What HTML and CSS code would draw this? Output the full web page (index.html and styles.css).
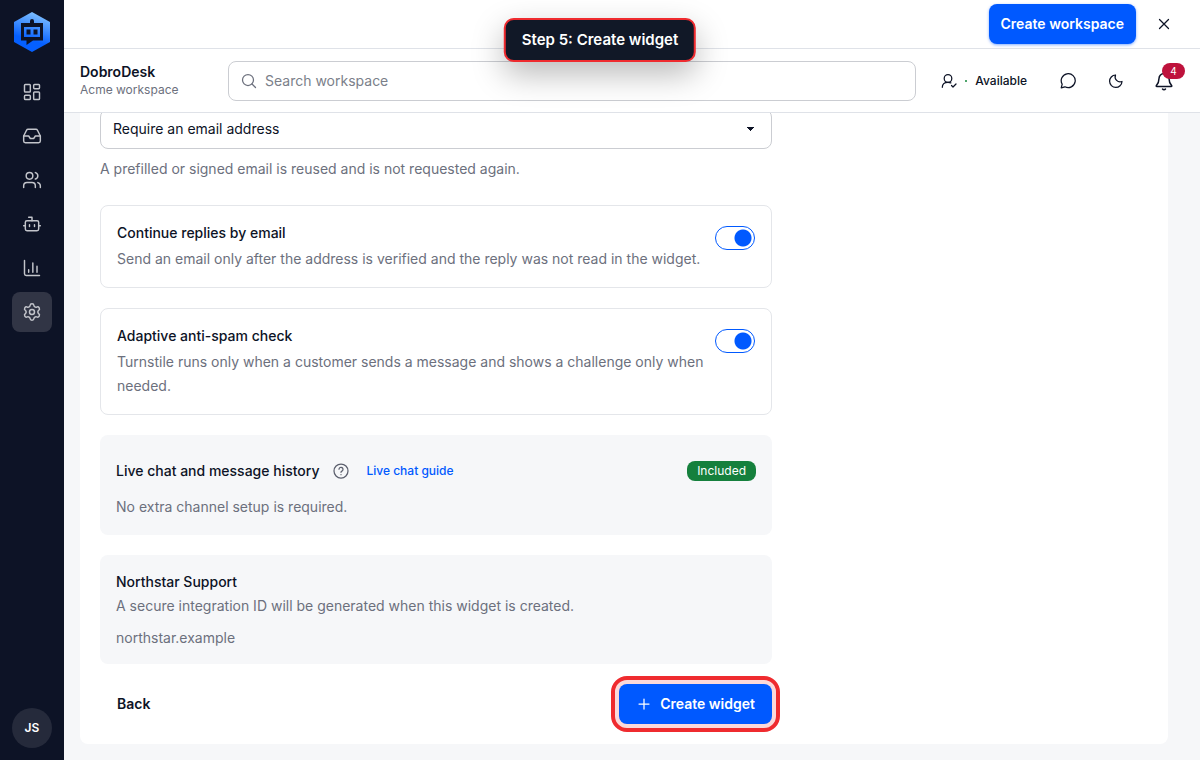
FILE: index.html
```html
<!DOCTYPE html>
<html lang="en">
<head>
    <meta charset="UTF-8">
    <meta name="viewport" content="width=device-width, initial-scale=1.0">
    <title>DobroDesk</title>
    <link rel="stylesheet" href="styles.css">
</head>
<body>
    <aside class="sidebar">
        <a class="logo" href="#" aria-label="DobroDesk">
            <svg width="36" height="40" viewBox="0 0 36 40">
                <defs>
                    <linearGradient id="logoFill" gradientUnits="userSpaceOnUse" x1="24" y1="2" x2="16" y2="28">
                        <stop offset="0" stop-color="#7abcff"/>
                        <stop offset="1" stop-color="#0560ff"/>
                    </linearGradient>
                </defs>
                <path fill="url(#logoFill)" d="M18 0l18 10v20L18 40 0 30V10z"/>
                <path fill="#0d1326" d="M16 11V9a2 2 0 0 1 4 0v2h9v17.500H19l-6.500 4.500v-4.500H7V11z"/>
                <path fill="url(#logoFill)" d="M10 15h16v10H10z"/>
                <path fill="#0d1326" d="M12.500 17.500h4v5h-4zM19.500 17.500h4v5h-4z"/>
            </svg>
        </a>
        <nav class="nav">
            <a class="nav-item" href="#" aria-label="Dashboard">
                <svg class="icon" viewBox="0 0 24 24"><rect x="3" y="3" width="7" height="9" rx="1"/><rect x="14" y="3" width="7" height="5" rx="1"/><rect x="14" y="12" width="7" height="9" rx="1"/><rect x="3" y="16" width="7" height="5" rx="1"/></svg>
            </a>
            <a class="nav-item" href="#" aria-label="Inbox">
                <svg class="icon" viewBox="0 0 24 24"><path d="M22 12h-6l-2 3h-4l-2-3H2"/><path d="M5.450 5.110 2 12v6a2 2 0 0 0 2 2h16a2 2 0 0 0 2-2v-6l-3.450-6.890A2 2 0 0 0 16.760 4H7.240a2 2 0 0 0-1.790 1.110z"/></svg>
            </a>
            <a class="nav-item" href="#" aria-label="Customers">
                <svg class="icon" viewBox="0 0 24 24"><path d="M16 21v-2a4 4 0 0 0-4-4H6a4 4 0 0 0-4 4v2"/><circle cx="9" cy="7" r="4"/><path d="M22 21v-2a4 4 0 0 0-3-3.870"/><path d="M16 3.130a4 4 0 0 1 0 7.750"/></svg>
            </a>
            <a class="nav-item" href="#" aria-label="Bots">
                <svg class="icon" viewBox="0 0 24 24"><path d="M12 8V4H8"/><rect x="4" y="8" width="16" height="12" rx="2"/><path d="M2 14h2M20 14h2M15 13v2M9 13v2"/></svg>
            </a>
            <a class="nav-item" href="#" aria-label="Reports">
                <svg class="icon" viewBox="0 0 24 24"><path d="M3 3v16a2 2 0 0 0 2 2h16"/><path d="M8 17v-3M13 17V6M18 17v-7"/></svg>
            </a>
            <a class="nav-item active" href="#" aria-label="Settings">
                <svg class="icon" viewBox="0 0 24 24"><path d="M9.671 4.136a2.340 2.340 0 0 1 4.659 0 2.340 2.340 0 0 0 3.319 1.915 2.340 2.340 0 0 1 2.330 4.033 2.340 2.340 0 0 0 0 3.831 2.340 2.340 0 0 1-2.330 4.033 2.340 2.340 0 0 0-3.319 1.915 2.340 2.340 0 0 1-4.659 0 2.340 2.340 0 0 0-3.320-1.915 2.340 2.340 0 0 1-2.330-4.033 2.340 2.340 0 0 0 0-3.831A2.340 2.340 0 0 1 6.350 6.051a2.340 2.340 0 0 0 3.319-1.915"/><circle cx="12" cy="12" r="3"/></svg>
            </a>
        </nav>
        <button class="avatar" type="button">JS</button>
    </aside>

    <div class="page">
        <!-- workspace bar -->
        <div class="topbar">
            <button class="btn primary" type="button">Create workspace</button>
            <button class="icon-btn" type="button" aria-label="Close">
                <svg class="icon small" viewBox="0 0 16 16"><path d="M3.500 3.500l9 9M12.500 3.500l-9 9"/></svg>
            </button>
        </div>

        <header class="header">
            <div class="brand">
                <div class="brand-name">DobroDesk</div>
                <div class="brand-sub">Acme workspace</div>
            </div>
            <label class="search">
                <svg class="icon small" viewBox="0 0 16 16"><circle cx="7" cy="7" r="5.500"/><path d="M11 11l3.500 3.500"/></svg>
                <input type="text" placeholder="Search workspace" aria-label="Search workspace">
            </label>
            <div class="actions">
                <button class="status" type="button">
                    <svg class="icon small" viewBox="0 0 16 16"><circle cx="7" cy="5.500" r="3.800"/><path d="M1.300 14.300c0-3 2-5 5.700-5 1.200 0 2 .2 2.800.6M10.500 12.500l1.500 1.500 3-3"/></svg>
                    <span class="dot"></span>
                    <span>Available</span>
                </button>
                <button class="icon-btn" type="button" aria-label="Chat">
                    <svg class="icon small" viewBox="0 0 16 16"><path d="M1.200 14.800l1-3.600A7 7 0 1 1 4.900 13.800z"/></svg>
                </button>
                <button class="icon-btn" type="button" aria-label="Dark mode">
                    <svg class="icon small" viewBox="0 0 16 16"><path d="M7.500 2A5 5 0 0 0 14 8.500 6.200 6.200 0 1 1 7.500 2z"/></svg>
                </button>
                <button class="icon-btn bell" type="button" aria-label="Notifications">
                    <svg class="icon bell-icon" viewBox="0 0 20 20"><path d="M10 2.500a5 5 0 0 0-5 5c0 3.500-.8 5-2.600 7-.4.500-.2 1 .4 1h14.400c.6 0 .8-.5.4-1-1.800-2-2.600-3.500-2.600-7a5 5 0 0 0-5-5z"/><path d="M8.500 18a2 2 0 0 0 3 0"/></svg>
                    <span class="badge">4</span>
                </button>
            </div>
        </header>

        <main class="content">
            <div class="panel">
                <form class="form">
                    <select class="select" aria-label="Email requirement" aria-describedby="email-hint">
                        <option>Require an email address</option>
                    </select>
                    <p class="hint" id="email-hint">A prefilled or signed email is reused and is not requested again.</p>

                    <div class="card option">
                        <div class="option-text">
                            <label class="title" for="replies">Continue replies by email</label>
                            <p class="desc">Send an email only after the address is verified and the reply was not read in the widget.</p>
                        </div>
                        <input class="toggle" type="checkbox" id="replies" checked>
                    </div>

                    <div class="card option">
                        <div class="option-text">
                            <label class="title" for="spam">Adaptive anti-spam check</label>
                            <p class="desc">Turnstile runs only when a customer sends a message and shows a challenge only when needed.</p>
                        </div>
                        <input class="toggle" type="checkbox" id="spam" checked>
                    </div>

                    <div class="card muted history">
                        <div class="row">
                            <h3 class="title">Live chat and message history</h3>
                            <button class="help" type="button" aria-label="Help">
                                <svg class="icon small" viewBox="0 0 16 16"><circle cx="8" cy="8" r="7"/><path d="M6 6.200a2 2 0 1 1 2.900 1.900c-.6.300-.9.600-.9 1.200M8 11.500v.200"/></svg>
                            </button>
                            <a class="link" href="#">Live chat guide</a>
                            <span class="tag">Included</span>
                        </div>
                        <p class="desc">No extra channel setup is required.</p>
                    </div>

                    <div class="card muted summary">
                        <h3 class="title">Northstar Support</h3>
                        <p class="desc">A secure integration ID will be generated when this widget is created.</p>
                        <p class="desc domain">northstar.example</p>
                    </div>

                    <div class="footer">
                        <button class="btn ghost" type="button">Back</button>
                        <button class="btn primary highlight" type="submit">
                            <svg class="icon small" viewBox="0 0 16 16"><path d="M8 3v10M3 8h10"/></svg>
                            Create widget
                        </button>
                    </div>
                </form>
            </div>
        </main>
    </div>

    <div class="step">Step 5: Create widget</div>
</body>
</html>
```
FILE: styles.css
```css
* {
    box-sizing: border-box;
}

body {
    margin: 0;
    height: 100vh;
    display: flex;
    overflow: hidden;
    background: #f6f7f9;
    color: #0d1326;
    font-family: Inter, "Liberation Sans", sans-serif;
    font-size: 14px;
    line-height: 24px;
}

h3, p {
    margin: 0;
}

a {
    color: inherit;
    text-decoration: none;
}

button, input, select {
    font: inherit;
    color: inherit;
}

button {
    border: 0;
    padding: 0;
    background: none;
    cursor: pointer;
}

.icon {
    width: 20px;
    height: 20px;
    flex: none;
    fill: none;
    stroke: currentColor;
    stroke-width: 1.75;
    stroke-linecap: round;
    stroke-linejoin: round;
}

.icon.small {
    width: 16px;
    height: 16px;
    stroke-width: 1.25;
}

/* sidebar */
.sidebar {
    width: 64px;
    flex: none;
    display: flex;
    flex-direction: column;
    align-items: center;
    padding: 12px;
    background: #0d1326;
}

.logo {
    height: 40px;
    margin-bottom: 20px;
}

.nav {
    display: flex;
    flex-direction: column;
    gap: 4px;
}

.nav-item {
    width: 40px;
    height: 40px;
    display: flex;
    align-items: center;
    justify-content: center;
    border-radius: 8px;
    color: #c3c5cb;
}

.nav-item.active {
    background: #313545;
}

.avatar {
    width: 40px;
    height: 40px;
    margin-top: auto;
    border-radius: 50%;
    background: #252a3b;
    color: #fff;
    font-size: 12px;
    font-weight: 600;
}

/* top */
.page {
    flex: 1;
    min-width: 0;
    display: flex;
    flex-direction: column;
}

.topbar {
    height: 49px;
    flex: none;
    display: flex;
    align-items: center;
    justify-content: flex-end;
    gap: 8px;
    padding: 0 16px;
    background: #fff;
    border-bottom: 1px solid #dfe2e8;
}

.btn {
    height: 40px;
    display: flex;
    align-items: center;
    gap: 8px;
    border-radius: 8px;
    font-weight: 600;
}

.primary {
    padding: 0 12px;
    background: #0059ff;
    color: #fff;
    box-shadow: 0 1px 3px rgba(0, 89, 255, 0.5);
}

.icon-btn {
    width: 40px;
    height: 40px;
    display: flex;
    align-items: center;
    justify-content: center;
    border-radius: 8px;
}

.header {
    height: 64px;
    flex: none;
    display: flex;
    align-items: center;
    padding: 0 16px;
    background: #fff;
    border-bottom: 1px solid #dfe2e8;
}

.brand {
    width: 148px;
    flex: none;
}

.brand-name {
    font-weight: 600;
    line-height: 18px;
}

.brand-sub {
    color: #6c707d;
    font-size: 12px;
    line-height: 18px;
}

.search {
    flex: 1;
    height: 40px;
    display: flex;
    align-items: center;
    gap: 8px;
    padding: 0 12px;
    border: 1px solid #cbcdd2;
    border-radius: 8px;
    color: #6c707d;
}

.search input {
    flex: 1;
    min-width: 0;
    padding: 0;
    border: 0;
    outline: 0;
    background: none;
}

.search input::placeholder {
    color: #7b7f8a;
    opacity: 1;
}

.actions {
    display: flex;
    align-items: center;
    gap: 8px;
    margin-left: 12px;
}

.status {
    height: 40px;
    display: flex;
    align-items: center;
    gap: 8px;
    padding: 0 13px;
    font-size: 12px;
    font-weight: 500;
}

.dot {
    width: 2px;
    height: 2px;
    background: #4fa56c;
}

.bell {
    position: relative;
}

.bell-icon {
    stroke-width: 1.5;
}

.badge {
    position: absolute;
    top: 2px;
    right: -1px;
    width: 23px;
    height: 16px;
    border-radius: 8px;
    background: #be123c;
    color: #fff;
    font-size: 10px;
    line-height: 16px;
}

/* the form is scrolled to its end */
.content {
    flex: 1;
    min-height: 0;
    display: flex;
    flex-direction: column;
    justify-content: flex-end;
    overflow: hidden;
    padding: 0 32px 16px 16px;
}

.panel {
    padding: 20px;
    background: #fff;
    border-radius: 8px;
}

.form {
    max-width: 672px;
    display: flex;
    flex-direction: column;
    gap: 20px;
}

.select {
    appearance: none;
    width: 100%;
    height: 40px;
    padding: 0 12px;
    border: 1px solid #cbcdd2;
    border-radius: 8px;
    background:
        linear-gradient(to bottom left, #0d1326 50%, transparent 50%) right 20px center / 4px 4px no-repeat,
        linear-gradient(to bottom right, #0d1326 50%, transparent 50%) right 16px center / 4px 4px no-repeat,
        #fff;
}

.hint {
    margin: -12px 0 4px;
    color: #6c707d;
}

.card {
    padding: 15px 16px 16px;
    border: 1px solid #e4e6ea;
    border-radius: 8px;
}

.title {
    display: block;
    font-size: 14px;
    font-weight: 500;
}

.desc {
    color: #6c707d;
}

.option {
    display: flex;
    justify-content: space-between;
    gap: 8px;
}

.option .desc {
    margin-top: 2px;
}

.toggle {
    appearance: none;
    width: 40px;
    height: 24px;
    flex: none;
    margin: 5px 0 0;
    border: 1px solid #0059ff;
    border-radius: 12px;
    background: radial-gradient(circle at 27px 11px, #0059ff 8px, transparent 9px);
}

.muted {
    padding: 16px;
    border: 0;
    background: #f6f7f9;
}

.row {
    display: flex;
    align-items: center;
    height: 40px;
}

.help {
    width: 16px;
    height: 16px;
    margin: 0 17px 0 14px;
    color: #5b5f6d;
}

.help .icon {
    display: block;
}

.link {
    color: #0059ff;
    font-size: 12px;
    font-weight: 500;
}

.tag {
    margin-left: auto;
    padding: 0 10px;
    border-radius: 8px;
    background: #15803d;
    color: #fff;
    font-size: 12px;
    line-height: 20px;
}

.history .desc {
    margin-top: 4px;
}

.summary {
    padding: 15px 16px 14px;
}

.domain {
    margin-top: 8px;
}

.footer {
    display: flex;
    justify-content: space-between;
}

.ghost {
    padding: 0 17px;
}

.highlight {
    padding: 0 17px;
    box-shadow: 0 0 0 4px #fbd9da;
    outline: 4px solid #ef2b2f;
    outline-offset: 4px;
}

/* walkthrough label */
.step {
    position: absolute;
    top: 18px;
    left: 50%;
    transform: translateX(-50%);
    padding: 8px 16px;
    border: 2px solid #ef2b2f;
    border-radius: 10px;
    background: #111827;
    color: #fff;
    font-size: 15px;
    font-weight: 600;
    box-shadow: 0 12px 32px rgba(0, 0, 0, 0.28);
}
```
